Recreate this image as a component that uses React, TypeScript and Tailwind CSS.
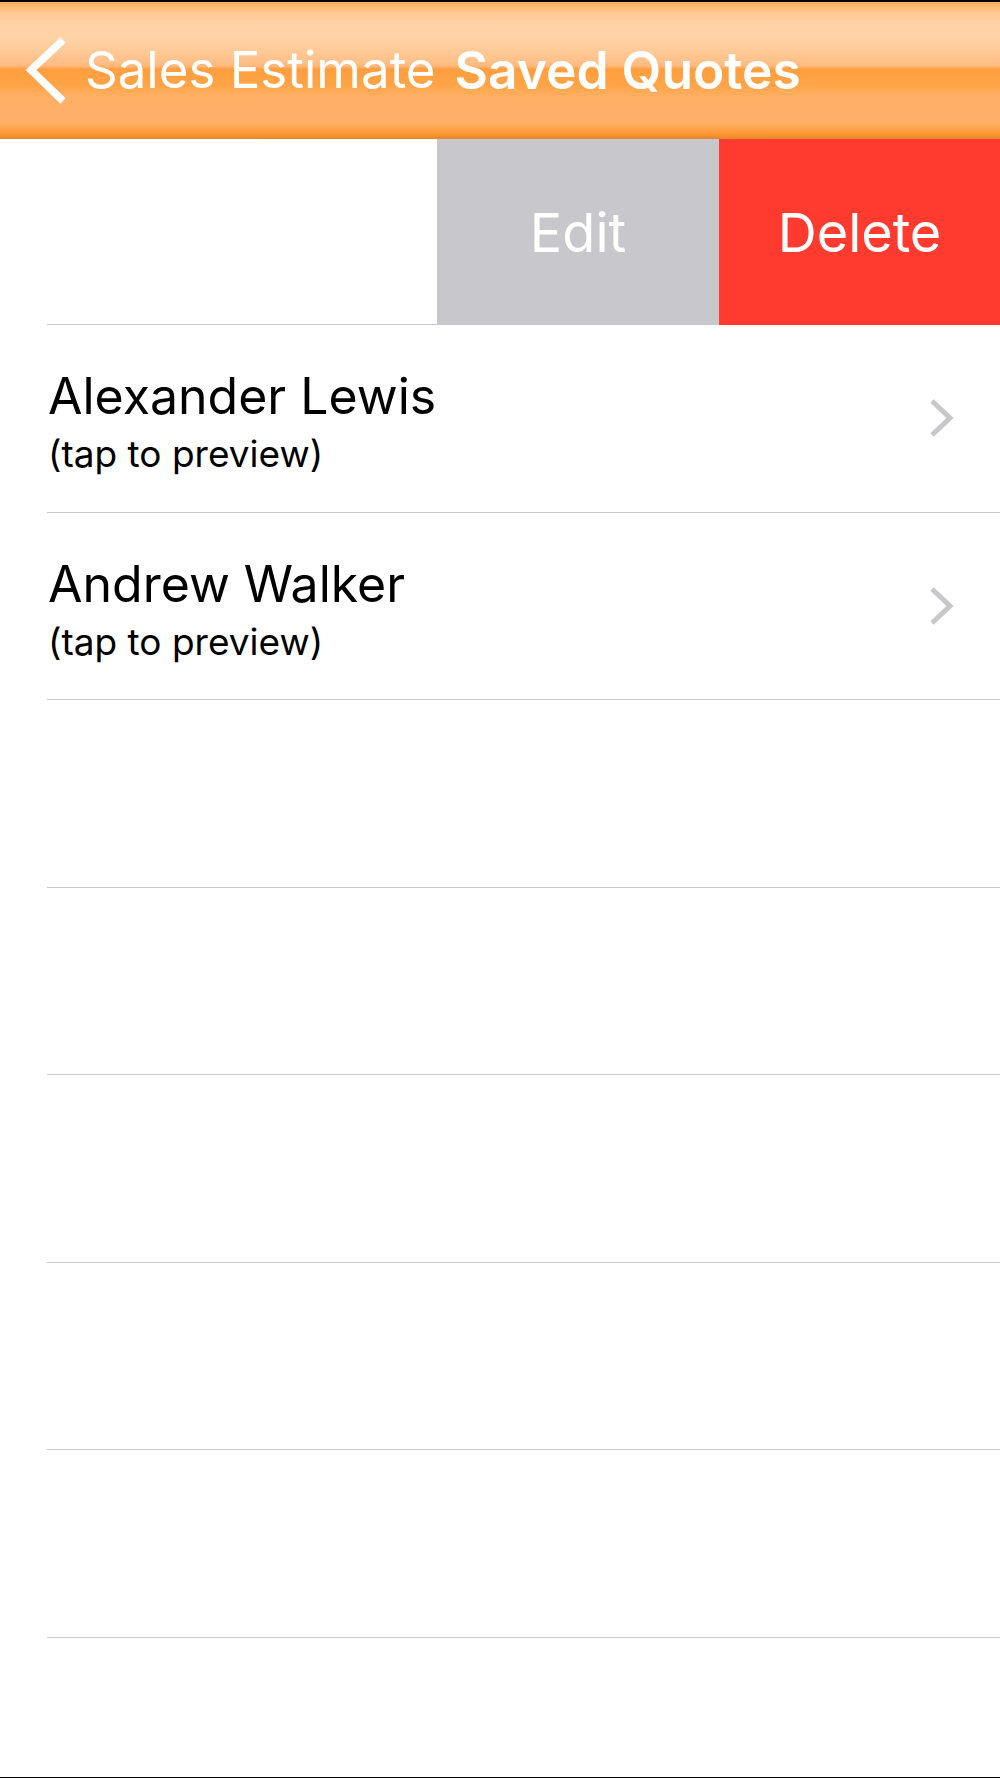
import React from 'react';

const font = { fontFamily: 'Inter, "Liberation Sans", sans-serif' };

const quotes = [
  { name: 'Alexander Lewis', note: '(tap to preview)' },
  { name: 'Andrew Walker', note: '(tap to preview)' },
];

const Chevron: React.FC = () => (
  <svg width="26" height="40" viewBox="0 0 26 40" className="shrink-0">
    <polyline points="4,3 22,20 4,37" fill="none" stroke="#c7c7cc" strokeWidth="5" />
  </svg>
);

const QuoteRow: React.FC<{ name?: string; note?: string }> = ({ name, note }) => (
  <div className="flex flex-col">
    <div className="h-[186.5px] flex items-center pl-[48px] pr-[46px]">
      {name && (
        <>
          <div className="flex-1 flex flex-col pt-[7px] text-black">
            <span className="text-[50px] leading-[58px]">{name}</span>
            <span className="mt-[7px] text-[37px] leading-[44px]">{note}</span>
          </div>
          <Chevron />
        </>
      )}
    </div>
    <div className="ml-[47px] h-px bg-[#c8c7cc]" />
  </div>
);

export default function App() {
  const empties = [0, 1, 2, 3, 4];

  return (
    <div className="w-[1000px] h-[1778px] bg-white flex flex-col border-t-2 border-b border-black overflow-hidden" style={font}>
      {/* Nav bar */}
      <header className="h-[137px] shrink-0 flex items-center bg-[linear-gradient(to_bottom,#ffae5e_0%,#ffc890_8%,#ffd4a8_16%,#ffd2a4_28%,#ffc088_44%,#ffb678_47%,#ff9e3e_49%,#ffa446_60%,#ffb066_70%,#ffb066_88%,#ff9a35_96%,#e0852f_100%)]">
        <svg width="44" height="68" viewBox="0 0 44 68" className="ml-[25px] shrink-0">
          <polyline points="38,3 6,33 38,64" fill="none" stroke="white" strokeWidth="7.5" />
        </svg>
        <span className="ml-[16px] text-white text-[51px]">Sales Estimate</span>
        <span className="ml-[19px] text-white text-[51.5px] font-semibold">Saved Quotes</span>
      </header>

      {/* Swiped row with actions */}
      <div className="h-[186px] shrink-0 flex">
        <div className="w-[437px] flex flex-col justify-end">
          <div className="ml-[47px] h-px bg-[#c8c7cc]" />
        </div>
        <button className="w-[282px] bg-[#c7c7cc] flex items-center justify-center text-white text-[54px]">
          Edit
        </button>
        <button className="flex-1 bg-[#ff3b30] flex items-center justify-center text-white text-[54px]">
          Delete
        </button>
      </div>

      {/* Quote list */}
      {quotes.map((q) => (
        <QuoteRow key={q.name} name={q.name} note={q.note} />
      ))}
      {empties.map((i) => (
        <QuoteRow key={i} />
      ))}
    </div>
  );
}
